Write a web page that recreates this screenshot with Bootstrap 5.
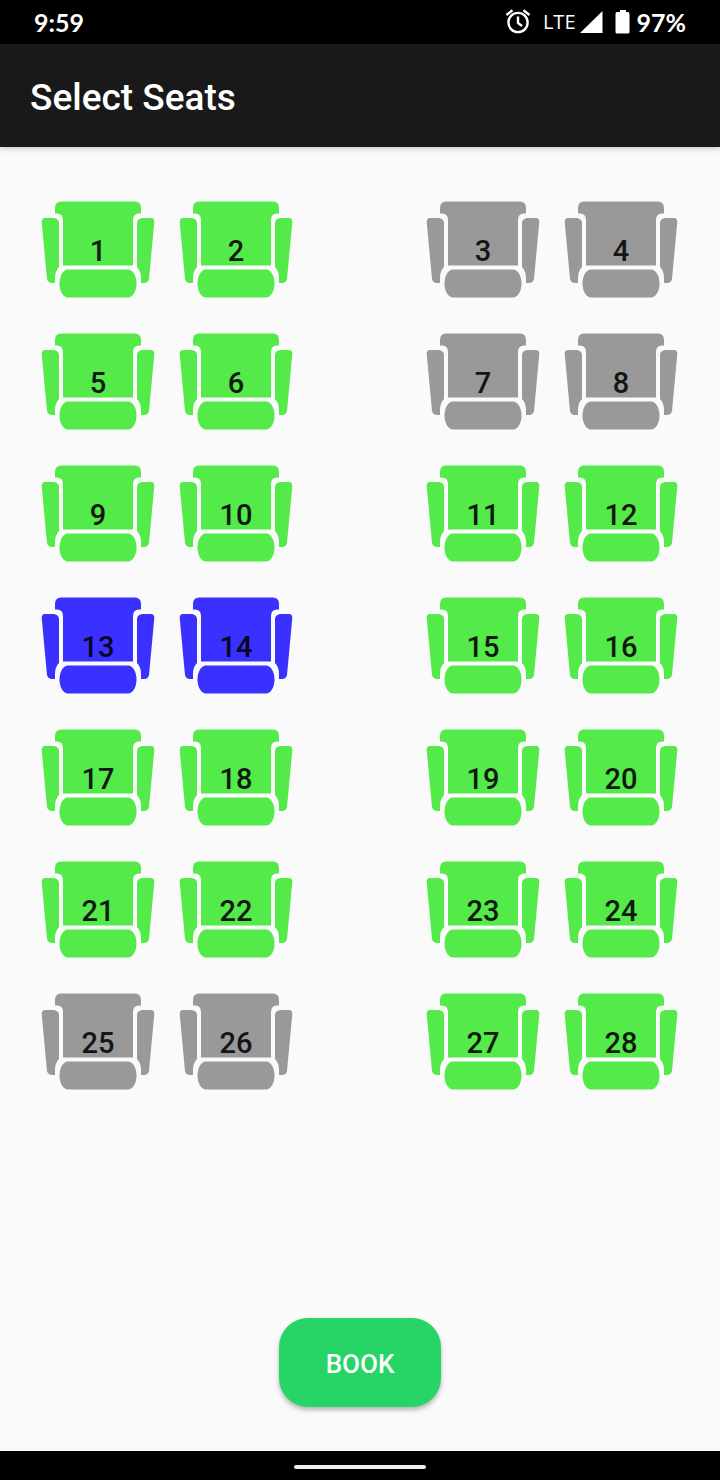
<!DOCTYPE html>
<html lang="en">
<head>
<meta charset="utf-8">
<meta name="viewport" content="width=device-width, initial-scale=1">
<title>Select Seats</title>
<link href="https://cdn.jsdelivr.net/npm/bootstrap@5.3.0/dist/css/bootstrap.min.css" rel="stylesheet">
<style>
  body { font-family: Roboto, "Liberation Sans", sans-serif; background: #fafafa; }
  .status-bar { height: 44px; padding: 0 34px; background: #000; color: #fff; font: 700 25px/44px Lato, sans-serif; }
  .network { font: 400 20px/44px "Open Sans", sans-serif; }
  .app-bar { height: 103px; padding: 4px 30px 0; background: #191919; color: #fff; box-shadow: 0 1px 6px rgba(0,0,0,.25); }
  .app-bar h1 { font-size: 37px; line-height: 44px; font-weight: 500; }
  .seat-map { padding: 54px 42px 0 41px; }
  .seat-rows { gap: 35px; }
  .seat-pair { gap: 24px; }
  .seat { display: grid; width: 114px; height: 97px; padding: 0; border: 0; background: none; color: #54ea49; }
  .seat > * { grid-area: 1 / 1; }
  .seat svg { width: 114px; height: 97px; fill: currentColor; }
  .seat span { align-self: center; justify-self: center; padding-top: 2px; color: #101810; font-size: 29px; line-height: 34px; font-weight: 500; }
  .seat.booked { color: #999; }
  .seat.booked span { color: #151515; }
  .seat.chosen { color: #3a30ff; }
  .seat.chosen span { color: #080620; }
  .book-btn, .book-btn:hover { width: 162px; height: 89px; margin-bottom: 44px; padding: 8px 12px 5px; border: 0; border-radius: 29px; background: #27d567; color: #fff; font-size: 26px; font-weight: 500; box-shadow: 0 3px 5px rgba(0,0,0,.28); }
  .gesture-bar { height: 29px; padding-top: 2px; background: #000; }
  .gesture-bar span { width: 132px; height: 4px; border-radius: 2px; background: #eee; }
</style>
</head>
<body class="d-flex flex-column min-vh-100">
<svg class="d-none" aria-hidden="true">
  <symbol id="seat" viewBox="0 0 114 97">
    <path d="M14 12.500V7Q14 .5 20 .5H94Q100 .5 100 7V12.500H98Q92 12.500 92 19V64.500H22V19Q22 12.500 16 12.500Z"/>
    <path d="M4 17H13Q18 18 18 22V66Q14 70 14 77V82H11Q7 82 6 78L.7 21Q.7 17 4 17Z"/>
    <path d="M110 17H101Q96 18 96 22V66Q100 70 100 77V82H103Q107 82 108 78L113.300 21Q113.300 17 110 17Z"/>
    <path d="M27 68.500H87C92 68.500 95.500 75 95.500 82.500S92 96.500 87 96.500H27C22 96.500 18.500 90 18.500 82.500S22 68.500 27 68.500Z"/>
  </symbol>
</svg>
<div class="status-bar d-flex justify-content-between flex-shrink-0">
  <span>9:59</span>
  <div class="d-flex align-items-center">
    <svg class="me-2" width="26" height="26" viewBox="0 0 26 26" fill="none" stroke="#fff" stroke-width="2.4" role="img" aria-label="Alarm"><circle cx="13" cy="13.500" r="9.600"/><path d="M13 7.500V14L17 17M1.500 6L7.500 1.200M24.500 6L18.500 1.200"/></svg>
    <span class="network ms-1">LTE</span>
    <svg class="ms-1" width="23" height="22" viewBox="0 0 23 22" fill="#fff" role="img" aria-label="Signal"><path d="M0 22L22.500 0V22Z"/></svg>
    <svg class="ms-2 me-1" width="22" height="24" viewBox="0 0 22 24" fill="#fff" role="img" aria-label="Battery"><path d="M9 0H15V2H17Q18.500 2 18.500 4V22Q18.500 23.500 17 23.500H6Q4.500 23.500 4.500 22V4Q4.500 2 6 2H9Z"/></svg>
    <span>97%</span>
  </div>
</div>
<header class="app-bar d-flex align-items-center flex-shrink-0"><h1 class="m-0">Select Seats</h1></header>
<main class="d-flex flex-column flex-grow-1">
  <div class="seat-map"><div class="seat-rows d-flex flex-column" id="rows"></div></div>
  <button type="button" class="book-btn btn mt-auto mx-auto">BOOK</button>
</main>
<footer class="gesture-bar d-flex align-items-center justify-content-center flex-shrink-0"><span></span></footer>
<script src="https://cdn.jsdelivr.net/npm/bootstrap@5.3.0/dist/js/bootstrap.bundle.min.js"></script>
<script>
  const booked = [3, 4, 7, 8, 25, 26], chosen = [13, 14];
  const seat = n => {
    const state = booked.includes(n) ? 'booked' : chosen.includes(n) ? 'chosen' : '';
    return `<button type="button" class="seat ${state}" ${state === 'booked' ? 'disabled' : `aria-pressed="${state === 'chosen'}"`}><svg aria-hidden="true"><use href="#seat"/></svg><span>${n}</span></button>`;
  };
  const pair = n => `<div class="seat-pair d-flex">${seat(n)}${seat(n + 1)}</div>`;
  let html = '';
  for (let n = 1; n <= 28; n += 4) html += `<div class="d-flex justify-content-between">${pair(n)}${pair(n + 2)}</div>`;
  const rows = document.getElementById('rows');
  rows.innerHTML = html;
  rows.addEventListener('click', e => {
    const b = e.target.closest('.seat');
    if (b) b.setAttribute('aria-pressed', b.classList.toggle('chosen'));
  });
</script>
</body>
</html>
